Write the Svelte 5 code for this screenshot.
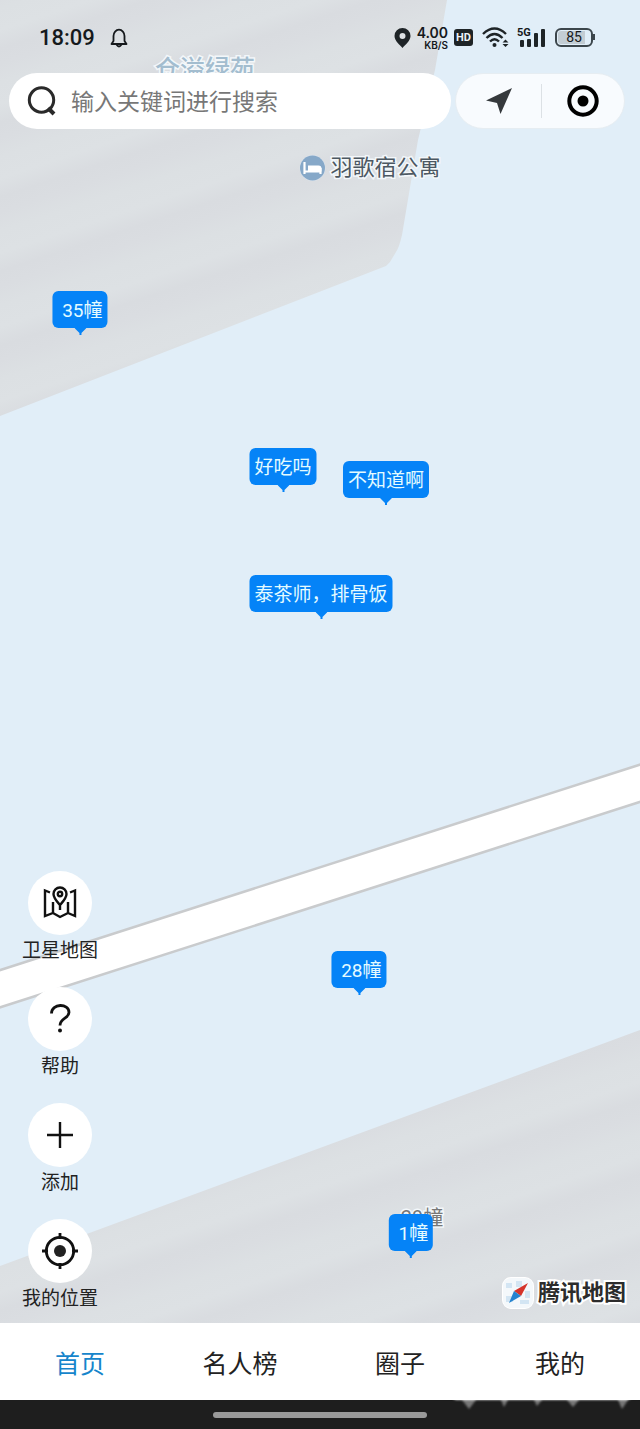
<script>
    let keyword = $state('')
    let activeTab = $state('首页')

    const tabs = ['首页', '名人榜', '圈子', '我的']

    const tools = [
        { icon: 'map', label: '卫星地图' },
        { icon: 'help', label: '帮助' },
        { icon: 'add', label: '添加' },
        { icon: 'locate', label: '我的位置' }
    ]

    // x and y are where the tip of the bubble touches the map
    const markers = [
        { x: 80, y: 335, text: ' 35幢' },
        { x: 283, y: 492, text: '好吃吗' },
        { x: 386, y: 505, text: '不知道啊' },
        { x: 321, y: 619, text: '泰茶师，排骨饭' },
        { x: 359, y: 995, text: ' 28幢' },
        { x: 411, y: 1258, text: ' 1幢' }
    ]

    const places = [
        { x: 205, y: 70, text: '仓溢绿苑', kind: 'estate' },
        { x: 370, y: 168, text: '羽歌宿公寓', kind: 'hotel' },
        { x: 422, y: 1218, text: '29幢', kind: 'building' }
    ]
</script>

<div class="screen">
    <main class="map">
        <svg class="ground" viewBox="0 0 640 1323" preserveAspectRatio="xMidYMid slice" aria-hidden="true">
            <defs>
                <linearGradient id="stripes" gradientUnits="userSpaceOnUse" x1="0" y1="8" x2="22" y2="75" spreadMethod="repeat">
                    <stop offset="0" stop-color="#dce0e3" />
                    <stop offset="0.3" stop-color="#dde1e4" />
                    <stop offset="0.55" stop-color="#d9dce0" />
                    <stop offset="0.75" stop-color="#dadde1" />
                    <stop offset="1" stop-color="#dce0e3" />
                </linearGradient>
            </defs>
            <rect width="640" height="1323" fill="#e1eef8" />
            <path d="M0 0H447L435 70L418 140L402 235Q399 248 396 252L390 262L386 266L0 416Z" fill="url(#stripes)" />
            <path d="M0 1266L640 1030V1323H0Z" fill="url(#stripes)" />
            <path d="M-10 992L650 780" stroke="#c9cbcd" stroke-width="38" />
            <path d="M-10 992L650 780" stroke="#fff" stroke-width="33" />
        </svg>

        {#each places as place}
            <div class="place {place.kind}" style="left: {place.x}px; top: {place.y}px">
                {#if place.kind === 'hotel'}
                    <svg width="26" height="26" viewBox="0 0 26 26" aria-hidden="true">
                        <circle cx="13" cy="13" r="12.500" fill="#86a8c8" stroke="#dce7f1" />
                        <path d="M5 7V19M5 16.500H21M21 19V13" stroke="#fff" stroke-width="2.200" fill="none" />
                        <path d="M8.500 10.500H19A3 3 0 0 1 22 13.500V16.500H8.500Z" fill="#fff" />
                    </svg>
                {/if}
                <span>{place.text}</span>
            </div>
        {/each}

        {#each markers as marker}
            <button class="marker" style="left: {marker.x}px; top: {marker.y}px">
                <span class="bubble">{marker.text}</span>
                <svg width="12" height="7" viewBox="0 0 12 7" aria-hidden="true">
                    <path d="M0 0H12L7 5V7H5V5Z" fill="#0583f7" />
                </svg>
            </button>
        {/each}

        <header class="status">
            <div class="group">
                <span class="time">18:09</span>
                <svg width="18" height="20" viewBox="0 0 18 20" fill="none" stroke="#15191c" stroke-width="1.800" aria-hidden="true">
                    <path d="M1.500 16H16.500L14.500 13V8A5.500 6.300 0 0 0 3.500 8V13Z" stroke-linejoin="round" />
                    <path d="M6.500 16.500Q9 20.500 11.500 16.500" />
                </svg>
            </div>
            <div class="group right">
                <svg width="17" height="20" viewBox="0 0 17 20" aria-hidden="true">
                    <path fill-rule="evenodd" d="M8.500 0A8 8 0 0 0 .5 8C.5 13 6 17 8.500 20C11 17 16.500 13 16.500 8A8 8 0 0 0 8.500 0ZM8.500 5A3 3 0 1 1 8.500 11A3 3 0 0 1 8.500 5Z" fill="#1e2427" />
                </svg>
                <div class="speed">
                    <span class="rate">4.00</span>
                    <span class="unit">KB/S</span>
                </div>
                <span class="hd">HD</span>
                <svg class="wifi" width="27" height="21" viewBox="0 0 27 21" fill="none" stroke="#1e2427" stroke-width="2.400" aria-hidden="true">
                    <path d="M1 7Q12.500 -4 24 7" />
                    <path d="M4.500 11Q12.500 3 20.500 11" />
                    <path d="M8 14.500Q12.500 10 17 14.500" />
                    <circle cx="12.500" cy="18" r="2" fill="#1e2427" stroke="none" />
                    <path d="M20.500 15.500L23.500 12.500L26.500 15.500ZM20.500 17L23.500 20L26.500 17Z" fill="#1e2427" stroke="none" />
                </svg>
                <div class="signal">
                    <span class="net">5G</span>
                    <svg width="28" height="20" viewBox="0 0 28 20" fill="#1e2427" aria-hidden="true">
                        <rect x="3" y="12" width="4" height="7" rx="1" />
                        <rect x="10" y="11" width="4" height="8" rx="1" />
                        <rect x="17" y="5" width="4" height="14" rx="1" />
                        <rect x="24" y="1" width="4" height="18" rx="1" />
                    </svg>
                </div>
                <span class="battery"><span class="level">85</span></span>
            </div>
        </header>

        <div class="top">
            <label class="search">
                <svg width="30" height="30" viewBox="0 0 30 30" fill="none" stroke="#2a2a2a" stroke-width="3" aria-hidden="true">
                    <circle cx="14.500" cy="14" r="12.200" />
                    <path d="M21 22L27 28" stroke-width="4" />
                </svg>
                <input type="text" placeholder="输入关键词进行搜索" aria-label="搜索" bind:value={keyword}>
            </label>
            <div class="capsule">
                <button aria-label="导航">
                    <svg width="28" height="28" viewBox="0 0 28 28" aria-hidden="true">
                        <path d="M27 1L1 13.500L12 16L15.500 27Z" fill="#35393c" />
                    </svg>
                </button>
                <button aria-label="关闭">
                    <svg width="32" height="32" viewBox="0 0 32 32" aria-hidden="true">
                        <circle cx="16" cy="16" r="13.700" fill="none" stroke="#000" stroke-width="4" />
                        <circle cx="16" cy="16" r="5.500" />
                    </svg>
                </button>
            </div>
        </div>

        <div class="bottom">
            <div class="tools">
                {#each tools as tool}
                    <button class="tool">
                        <span class="circle">
                            <svg width="36" height="36" viewBox="0 0 36 36" fill="none" stroke="#111" stroke-width="2.400" aria-hidden="true">
                                {#if tool.icon === 'map'}
                                    <path d="M8 7.500L3 5.500V31L11 28L18 32L26 28L33 31V5.500L28 7.500M11 17V28M26 17V28" />
                                    <path d="M18 20C14 15.500 11.500 13 11.500 9A6.500 6.500 0 0 1 24.500 9C24.500 13 22 15.500 18 20ZM18 20V25" />
                                    <circle cx="18" cy="9" r="2.200" />
                                {:else if tool.icon === 'help'}
                                    <path d="M9.500 12.500C9.500 2 27 2 27 11.500C27 17.500 18 17 18 24.500" stroke-width="2.800" />
                                    <circle cx="18" cy="29.500" r="2" fill="#111" stroke="none" />
                                {:else if tool.icon === 'add'}
                                    <path d="M18 5V31M5 18H31" />
                                {:else}
                                    <circle cx="18" cy="18" r="13.700" stroke-width="2.800" />
                                    <circle cx="18" cy="18" r="6" fill="#222" stroke="none" />
                                    <path d="M18 0V6M18 30V36M0 18H6M30 18H36" stroke-width="2.800" />
                                {/if}
                            </svg>
                        </span>
                        <span class="label">{tool.label}</span>
                    </button>
                {/each}
            </div>
            <div class="brand">
                <svg width="32" height="32" viewBox="0 0 32 32" aria-hidden="true">
                    <rect x="1" y="1" width="30" height="30" rx="8" fill="#f4f8fb" stroke="#fff" stroke-width="2" />
                    <path d="M4 6h6v5H4zM14 4h6v6h-6zM4 19h7v6H4zM18 23h9v4h-9zM23 14h5v7h-5z" fill="#d3e5f3" />
                    <path d="M26 6L12 14L19 19Z" fill="#d5342b" />
                    <path d="M7 26L12 14L19 19Z" fill="#2583cf" />
                </svg>
                <span>腾讯地图</span>
            </div>
        </div>
    </main>

    <nav class="tabs">
        {#each tabs as tab}
            <button class:active={activeTab === tab} onclick={() => activeTab = tab}>{tab}</button>
        {/each}
    </nav>

    <footer class="system">
        <span class="handle"></span>
        <svg class="smudge" width="188" height="14" viewBox="0 0 188 14" aria-hidden="true">
            <defs>
                <filter id="soft"><feGaussianBlur stdDeviation="1" /></filter>
            </defs>
            <g filter="url(#soft)">
                <path d="M0 -2H180L176 0H4Z" fill="#ddd" />
                <path d="M10 0H24L17 9ZM49 0H56L52 7ZM82 0H90L85 6ZM115 0H127L121 7ZM166 0H176L170 9Z" fill="#777" />
            </g>
        </svg>
    </footer>
</div>

<style>
    :global(body) {
        margin: 0;
    }

    .screen {
        display: flex;
        flex-direction: column;
        min-height: 100vh;
        font-family: Roboto, 'Noto Sans CJK SC', sans-serif;
        color: #222;
    }

    button {
        padding: 0;
        border: none;
        background: none;
        font: inherit;
        color: inherit;
        cursor: pointer;
    }

    svg {
        display: block;
        flex: none;
    }

    .map {
        position: relative;
        flex: 1;
        display: flex;
        flex-direction: column;
        overflow: hidden;
    }

    .ground {
        position: absolute;
        width: 100%;
        height: 100%;
    }

    .place {
        position: absolute;
        display: flex;
        align-items: center;
        gap: 5px;
        transform: translate(-50%, -50%);
        white-space: nowrap;
        line-height: 28px;
        paint-order: stroke fill;
        -webkit-text-stroke: 3px #f3f7fa;
    }

    .estate {
        font-size: 25px;
        font-weight: 500;
        color: #a3bdcf;
    }

    .hotel {
        font-size: 22px;
        color: #4c5862;
    }

    .building {
        font-size: 20px;
        color: #777;
    }

    .marker {
        position: absolute;
        display: flex;
        flex-direction: column;
        align-items: center;
        transform: translate(-50%, -100%);
    }

    .bubble {
        padding: 3px 5px 0;
        border-radius: 6px;
        background: #0583f7;
        color: #e4fbff;
        font-size: 19px;
        line-height: 34px;
        white-space: pre;
    }

    .status {
        position: relative;
        display: flex;
        justify-content: space-between;
        align-items: center;
        box-sizing: border-box;
        height: 73px;
        padding: 2px 47px 0 39px;
        color: #15191c;
    }

    .group {
        display: flex;
        align-items: center;
        gap: 15px;
    }

    .right {
        gap: 6px;
    }

    .time {
        font-size: 22px;
        font-weight: 500;
        line-height: 24px;
    }

    .speed {
        display: flex;
        flex-direction: column;
        align-items: flex-end;
        font-family: Inter, sans-serif;
        font-weight: 600;
    }

    .rate {
        font-size: 14px;
        line-height: 14px;
    }

    .unit {
        font-size: 10px;
        line-height: 10px;
    }

    .hd {
        padding: 0 2px;
        border-radius: 3px;
        background: #1e2427;
        color: #eef3f7;
        font-size: 11px;
        font-weight: 700;
        line-height: 17px;
    }

    .wifi {
        margin: 0 2px 0 3px;
    }

    .signal {
        position: relative;
    }

    .net {
        position: absolute;
        top: 0;
        left: 0;
        font-size: 11px;
        font-weight: 700;
        line-height: 10px;
    }

    .battery {
        position: relative;
        display: flex;
        margin-left: 4px;
        padding: 1px;
        border: 2px solid #3c464c;
        border-radius: 6px;
    }

    .battery::after {
        content: '';
        position: absolute;
        top: 4px;
        right: -4px;
        width: 2px;
        height: 6px;
        background: #3c464c;
    }

    .level {
        width: 32px;
        border-radius: 3px;
        background: linear-gradient(to right, #c3cdd4 85%, transparent 85%);
        font-size: 14px;
        line-height: 13px;
        text-align: center;
    }

    .top {
        position: relative;
        display: flex;
        gap: 4px;
        padding: 0 15px 0 9px;
    }

    .search {
        flex: 1;
        display: flex;
        align-items: center;
        gap: 14px;
        height: 56px;
        padding: 0 18px;
        border-radius: 28px;
        background: #fff;
    }

    .search input {
        flex: 1;
        min-width: 0;
        padding: 2px 0 0;
        border: none;
        outline: none;
        background: none;
        font-family: inherit;
        font-size: 23px;
    }

    .search input::placeholder {
        color: #777;
    }

    .capsule {
        display: flex;
        align-items: center;
        width: 170px;
        box-sizing: border-box;
        padding-left: 2px;
        border: 1px solid #e6edf2;
        border-radius: 28px;
        background: #f8fbfe;
    }

    .capsule button {
        flex: 1;
        display: flex;
        justify-content: center;
        align-items: center;
        height: 34px;
    }

    .capsule button + button {
        border-left: 1px solid #dce1e5;
    }

    .bottom {
        position: relative;
        display: flex;
        justify-content: space-between;
        align-items: flex-end;
        margin-top: auto;
        padding: 0 14px 10px 22px;
    }

    .tools {
        display: flex;
        flex-direction: column;
        gap: 22px;
    }

    .tool {
        display: flex;
        flex-direction: column;
        align-items: center;
    }

    .circle {
        display: flex;
        justify-content: center;
        align-items: center;
        width: 64px;
        height: 64px;
        border-radius: 50%;
        background: #fff;
    }

    .label {
        padding-top: 2px;
        font-size: 19px;
        line-height: 28px;
    }

    .brand {
        display: flex;
        align-items: center;
        gap: 4px;
        padding-bottom: 4px;
        color: #2c2c2c;
        font-size: 22px;
        font-weight: 700;
        line-height: 32px;
        paint-order: stroke fill;
        -webkit-text-stroke: 4px #fff;
    }

    .tabs {
        display: flex;
        height: 77px;
        background: #fff;
    }

    .tabs button {
        flex: 1;
        font-size: 25px;
    }

    .tabs .active {
        color: #1685cb;
    }

    .system {
        position: relative;
        display: flex;
        justify-content: center;
        align-items: center;
        height: 29px;
        background: #1e1e1e;
    }

    .handle {
        width: 214px;
        height: 6px;
        border-radius: 3px;
        background: #999;
    }

    .smudge {
        position: absolute;
        top: 0;
        right: 0;
    }
</style>
